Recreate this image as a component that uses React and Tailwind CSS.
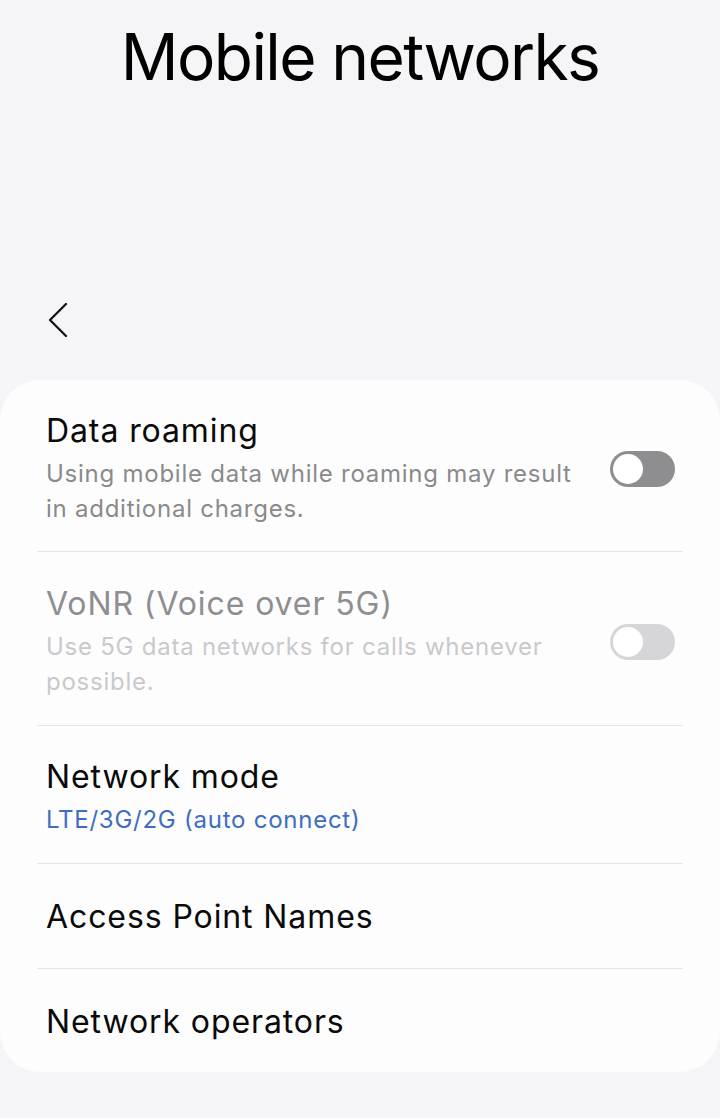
import React from 'react';

function Toggle({ disabled }) {
  return (
    <div
      className={`relative w-[65px] h-[36px] rounded-full shrink-0 ${
        disabled ? 'bg-[#d6d6d9]' : 'bg-[#8e8e90]'
      }`}
    >
      <div className="absolute left-[3px] top-[3px] w-[30px] h-[30px] rounded-full bg-white" />
    </div>
  );
}

function Row({ title, subtitle, subtitleClass, toggle, disabled, last, className }) {
  return (
    <div className={`flex items-center ${last ? '' : 'border-b border-[#e4e4e6]'} ${className}`}>
      <div className="flex-1 pl-[9px]">
        <div
          className={`text-[32px] leading-[40px] tracking-[0.9px] ${
            disabled ? 'text-[#8e8e90]' : 'text-[#0a0a0a]'
          }`}
        >
          {title}
        </div>
        {subtitle && (
          <div className={`mt-[5px] text-[24px] leading-[35px] tracking-[0.75px] ${subtitleClass}`}>
            {subtitle}
          </div>
        )}
      </div>
      {toggle && (
        <div className="pr-[8px] pl-4">
          <Toggle disabled={disabled} />
        </div>
      )}
    </div>
  );
}

export default function App() {
  return (
    <div
      className="min-h-[1118px] bg-[#f5f5f7] flex flex-col"
      style={{ fontFamily: 'Inter, "Noto Sans", sans-serif' }}
    >
      {/* Large header */}
      <div className="pt-[25px] flex justify-center">
        <h1 className="text-[64px] leading-[64px] text-black tracking-[-1.6px]">Mobile networks</h1>
      </div>

      {/* Back button */}
      <div className="mt-[203px] h-[56px] pl-[46px] flex items-center">
        <svg width="24" height="36" viewBox="0 0 24 36" fill="none">
          <path
            d="M20 2 L4 18 L20 34"
            stroke="#111"
            strokeWidth="2.3"
            strokeLinecap="round"
            strokeLinejoin="round"
          />
        </svg>
      </div>

      {/* Settings card */}
      <div className="mt-[32px] bg-[#fdfdfe] rounded-[40px] px-[37px]">
        <Row
          title="Data roaming"
          subtitle="Using mobile data while roaming may result in additional charges."
          subtitleClass="text-[#8a8a8c]"
          toggle
          className="pt-[31px] pb-[25px]"
        />
        <Row
          title="VoNR (Voice over 5G)"
          subtitle="Use 5G data networks for calls whenever possible."
          subtitleClass="text-[#c9c9cb]"
          toggle
          disabled
          className="pt-[32px] pb-[26px]"
        />
        <Row
          title="Network mode"
          subtitle="LTE/3G/2G (auto connect)"
          subtitleClass="text-[#3d6dc2]"
          className="pt-[31px] pb-[26px]"
        />
        <Row title="Access Point Names" className="pt-[33px] pb-[31px]" />
        <Row title="Network operators" last className="pt-[33px] pb-[30px]" />
      </div>
    </div>
  );
}
